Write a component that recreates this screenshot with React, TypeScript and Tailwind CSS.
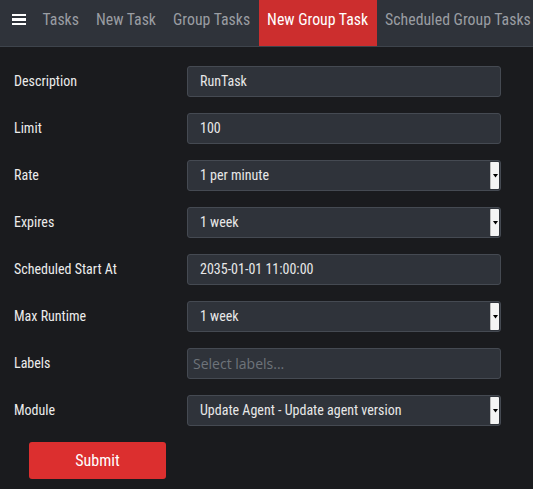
import React from "react";

const font = { fontFamily: '"Roboto Condensed", "Roboto", "Liberation Sans", sans-serif' };

function TextField({ value }: { value: string }) {
  return (
    <div className="w-[314px] h-[31px] rounded-[3px] border border-[#454a52] bg-[#2f333a] flex items-center px-[12px] text-[14px] text-[#e8e8e8]">
      {value}
    </div>
  );
}

function SelectField({ value }: { value: string }) {
  return (
    <div className="w-[314px] h-[31px] rounded-[3px] border border-[#454a52] bg-[#2f333a] flex items-center pl-[12px] text-[14px] text-[#e8e8e8]">
      <span className="flex-1">{value}</span>
      <div className="w-[9px] h-[27px] mr-[1px] bg-[#f4f4f4] border-l border-[#bdbdbd] flex items-center justify-center rounded-[1px]">
        <svg width="5" height="4" viewBox="0 0 5 4">
          <path d="M0 0 H5 L2.5 3.5 Z" fill="#000" />
        </svg>
      </div>
    </div>
  );
}

function Row({ label, children }: { label: string; children: React.ReactNode }) {
  return (
    <div className="flex items-center h-[47px]">
      <div className="w-[187px] pl-[14px] text-[14px] text-[#ececec]">{label}</div>
      {children}
    </div>
  );
}

export default function App() {
  const tabs = ["Tasks", "New Task", "Group Tasks", "New Group Task", "Scheduled Group Tasks"];
  return (
    <div className="w-[533px] h-[489px] bg-[#1a1b1e] overflow-hidden" style={font}>
      <div className="h-[47px] bg-[#2f333a] border-b border-[#3e444c] flex items-stretch whitespace-nowrap overflow-hidden">
        <div className="w-[34px] flex flex-col justify-center items-end pb-[7px] shrink-0">
          <div className="w-[14px] flex flex-col gap-[2px] mr-[8px]">
            <div className="h-[2.5px] bg-white" />
            <div className="h-[2.5px] bg-white" />
            <div className="h-[2.5px] bg-white" />
          </div>
        </div>
        {tabs.map((t, i) => (
          <div
            key={t}
            className={
              "px-[8.5px] pb-[6px] flex items-center text-[15.8px] shrink-0 " +
              (i === 3 ? "bg-[#cc2e2e] text-white" : "text-[#9a9da2]")
            }
          >
            {t}
          </div>
        ))}
      </div>
      <div className="pt-[11px]">
        <Row label="Description"><TextField value="RunTask" /></Row>
        <Row label="Limit"><TextField value="100" /></Row>
        <Row label="Rate"><SelectField value="1 per minute" /></Row>
        <Row label="Expires"><SelectField value="1 week" /></Row>
        <Row label="Scheduled Start At"><TextField value="2035-01-01 11:00:00" /></Row>
        <Row label="Max Runtime"><SelectField value="1 week" /></Row>
        <Row label="Labels">
          <div
            className="w-[314px] h-[31px] rounded-[3px] border border-[#454a52] bg-[#2f333a] flex items-center px-[5px] text-[14px] text-[#6e737a]"
            style={{ fontFamily: '"Open Sans", "Noto Sans", sans-serif' }}
          >
            Select labels...
          </div>
        </Row>
        <Row label="Module"><SelectField value="Update Agent - Update agent version" /></Row>
        <div className="pl-[29px] pt-[8px]">
          <button className="w-[137px] h-[37px] rounded-[3px] bg-[#dc2f2f] text-white text-[16px]">Submit</button>
        </div>
      </div>
    </div>
  );
}
